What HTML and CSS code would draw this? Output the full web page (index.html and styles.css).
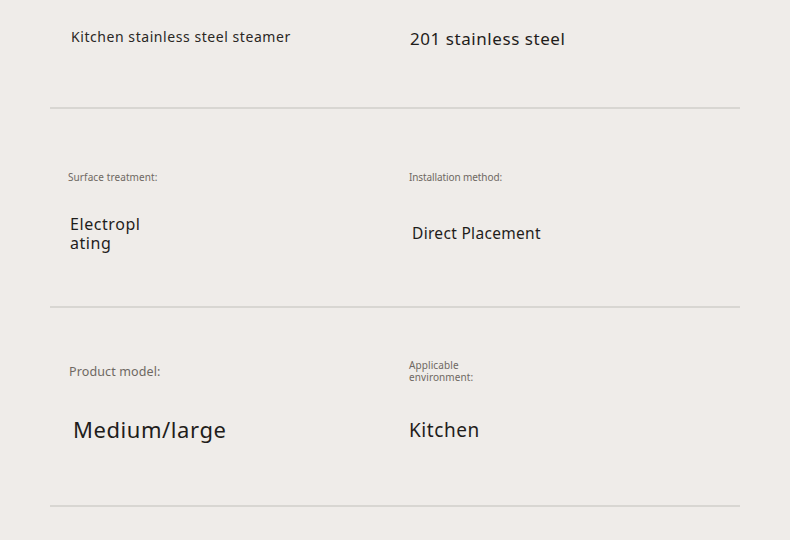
FILE: index.html
```html
<!DOCTYPE html>
<html>
<head>
<meta charset="utf-8">
<link rel="stylesheet" href="styles.css">
</head>
<body>
<div class="sheet">
  <div class="row row-top">
    <div class="cell cell-left">
      <div class="val v-title">Kitchen stainless steel steamer</div>
    </div>
    <div class="cell cell-right">
      <div class="val v-material">201 stainless steel</div>
    </div>
  </div>
  <div class="row row-mid">
    <div class="cell cell-left">
      <div class="lbl l-surface">Surface treatment:</div>
      <div class="val v-surface">Electroplating</div>
    </div>
    <div class="cell cell-right">
      <div class="lbl l-install">Installation method:</div>
      <div class="val v-install">Direct Placement</div>
    </div>
  </div>
  <div class="row row-bot">
    <div class="cell cell-left">
      <div class="lbl l-model">Product model:</div>
      <div class="val v-model">Medium/large</div>
    </div>
    <div class="cell cell-right">
      <div class="lbl l-env">Applicable environment:</div>
      <div class="val v-env">Kitchen</div>
    </div>
  </div>
</div>
</body>
</html>
```

FILE: styles.css
```css
html, body {
  margin: 0;
  padding: 0;
  background: #efece9;
}
body {
  font-family: "Noto Sans", "Open Sans", sans-serif;
  color: #1f1d1b;
  letter-spacing: 0.035em;
}
.sheet {
  padding: 0 50px;
}
.row {
  display: grid;
  grid-template-columns: 345px 345px;
  border-bottom: 2px solid #d8d6d2;
  box-sizing: border-box;
}
.row-top { height: 109px; }
.row-mid { height: 199px; }
.row-bot { height: 199px; }
.cell {
  display: flex;
  flex-direction: column;
  align-items: flex-start;
}
.lbl {
  color: #6e6862;
  letter-spacing: 0.01em;
}
.val {
  color: #1f1d1b;
}

/* top row */
.row-top .cell-left { padding: 27px 0 0 21px; }
.row-top .cell-right { padding: 27px 0 0 15px; }
.v-title { font-size: 14px; line-height: 20px; color: #2a2724; }
.v-material { font-size: 17px; line-height: 24px; }

/* middle row */
.row-mid .cell-left { padding: 61px 0 0 18px; }
.row-mid .cell-right { padding: 61px 0 0 14px; }
.l-surface { font-size: 10px; line-height: 14px; }
.l-install { font-size: 10px; line-height: 14px; letter-spacing: -0.01em; }
.v-surface {
  font-size: 16px;
  line-height: 19px;
  width: 76px;
  word-break: break-all;
  margin: 31px 0 0 2px;
}
.v-install { font-size: 15.5px; line-height: 20px; margin: 39px 0 0 3px; letter-spacing: 0.02em; }

/* bottom row */
.row-bot .cell-left { padding: 56px 0 0 19px; }
.row-bot .cell-right { padding: 51px 0 0 14px; }
.l-model { font-size: 12.5px; line-height: 16px; }
.l-env { font-size: 10px; line-height: 12px; width: 74px; }
.v-model { font-size: 22px; line-height: 28px; margin: 35px 0 0 4px; }
.v-env { font-size: 19px; line-height: 26px; margin: 34px 0 0 0; letter-spacing: 0.03em; }
```
